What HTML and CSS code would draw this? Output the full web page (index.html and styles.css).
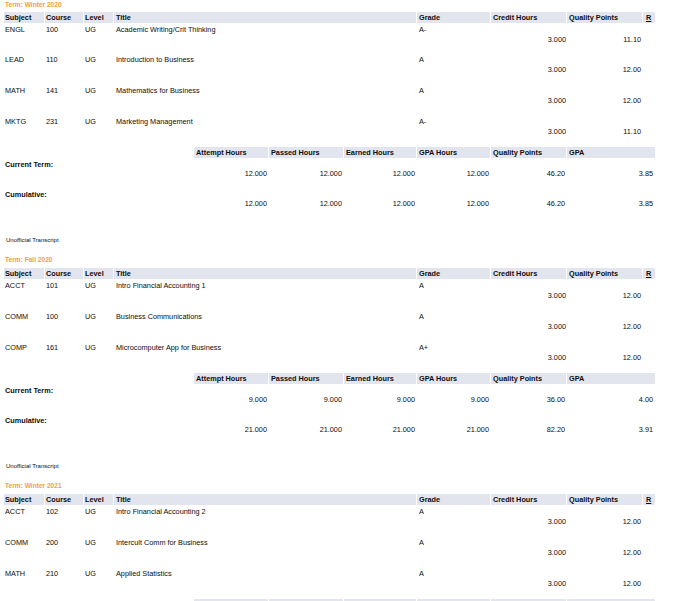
FILE: index.html
```html
<!DOCTYPE html>
<html lang="en">
<head>
<meta charset="utf-8">
<title>Unofficial Transcript</title>
<link rel="stylesheet" href="styles.css">
</head>
<body>
<div class="transcript">

  <section class="term">
    <div class="term-title">Term: Winter 2020</div>
    <div class="course-head">
      <div class="c-subj">Subject</div><div class="c-crse">Course</div><div class="c-lvl">Level</div><div class="c-title">Title</div><div class="c-grade">Grade</div><div class="c-cred">Credit Hours</div><div class="c-qp">Quality Points</div><div class="c-r">R</div>
    </div>
    <div class="course">
      <div class="course-main"><div class="c-subj">ENGL</div><div class="c-crse">100</div><div class="c-lvl">UG</div><div class="c-title">Academic Writing/Crit Thinking</div><div class="c-grade">A-</div></div>
      <div class="course-nums"><div class="n-cred">3.000</div><div class="n-qp">11.10</div></div>
    </div>
    <div class="course">
      <div class="course-main"><div class="c-subj">LEAD</div><div class="c-crse">110</div><div class="c-lvl">UG</div><div class="c-title">Introduction to Business</div><div class="c-grade">A</div></div>
      <div class="course-nums"><div class="n-cred">3.000</div><div class="n-qp">12.00</div></div>
    </div>
    <div class="course">
      <div class="course-main"><div class="c-subj">MATH</div><div class="c-crse">141</div><div class="c-lvl">UG</div><div class="c-title">Mathematics for Business</div><div class="c-grade">A</div></div>
      <div class="course-nums"><div class="n-cred">3.000</div><div class="n-qp">12.00</div></div>
    </div>
    <div class="course">
      <div class="course-main"><div class="c-subj">MKTG</div><div class="c-crse">231</div><div class="c-lvl">UG</div><div class="c-title">Marketing Management</div><div class="c-grade">A-</div></div>
      <div class="course-nums"><div class="n-cred">3.000</div><div class="n-qp">11.10</div></div>
    </div>
    <div class="totals-head">
      <div>Attempt Hours</div><div>Passed Hours</div><div>Earned Hours</div><div>GPA Hours</div><div>Quality Points</div><div>GPA</div>
    </div>
    <div class="totals-row">
      <div class="t-label">Current Term:</div>
      <div class="t-vals"><div>12.000</div><div>12.000</div><div>12.000</div><div>12.000</div><div>46.20</div><div class="t-gpa">3.85</div></div>
    </div>
    <div class="totals-row">
      <div class="t-label">Cumulative:</div>
      <div class="t-vals"><div>12.000</div><div>12.000</div><div>12.000</div><div>12.000</div><div>46.20</div><div class="t-gpa">3.85</div></div>
    </div>
    <div class="footer-note">Unofficial Transcript</div>
  </section>

  <section class="term">
    <div class="term-title">Term: Fall 2020</div>
    <div class="course-head">
      <div class="c-subj">Subject</div><div class="c-crse">Course</div><div class="c-lvl">Level</div><div class="c-title">Title</div><div class="c-grade">Grade</div><div class="c-cred">Credit Hours</div><div class="c-qp">Quality Points</div><div class="c-r">R</div>
    </div>
    <div class="course">
      <div class="course-main"><div class="c-subj">ACCT</div><div class="c-crse">101</div><div class="c-lvl">UG</div><div class="c-title">Intro Financial Accounting 1</div><div class="c-grade">A</div></div>
      <div class="course-nums"><div class="n-cred">3.000</div><div class="n-qp">12.00</div></div>
    </div>
    <div class="course">
      <div class="course-main"><div class="c-subj">COMM</div><div class="c-crse">100</div><div class="c-lvl">UG</div><div class="c-title">Business Communications</div><div class="c-grade">A</div></div>
      <div class="course-nums"><div class="n-cred">3.000</div><div class="n-qp">12.00</div></div>
    </div>
    <div class="course">
      <div class="course-main"><div class="c-subj">COMP</div><div class="c-crse">161</div><div class="c-lvl">UG</div><div class="c-title">Microcomputer App for Business</div><div class="c-grade">A+</div></div>
      <div class="course-nums"><div class="n-cred">3.000</div><div class="n-qp">12.00</div></div>
    </div>
    <div class="totals-head">
      <div>Attempt Hours</div><div>Passed Hours</div><div>Earned Hours</div><div>GPA Hours</div><div>Quality Points</div><div>GPA</div>
    </div>
    <div class="totals-row">
      <div class="t-label">Current Term:</div>
      <div class="t-vals"><div>9.000</div><div>9.000</div><div>9.000</div><div>9.000</div><div>36.00</div><div class="t-gpa">4.00</div></div>
    </div>
    <div class="totals-row">
      <div class="t-label">Cumulative:</div>
      <div class="t-vals"><div>21.000</div><div>21.000</div><div>21.000</div><div>21.000</div><div>82.20</div><div class="t-gpa">3.91</div></div>
    </div>
    <div class="footer-note">Unofficial Transcript</div>
  </section>

  <section class="term">
    <div class="term-title">Term: Winter 2021</div>
    <div class="course-head">
      <div class="c-subj">Subject</div><div class="c-crse">Course</div><div class="c-lvl">Level</div><div class="c-title">Title</div><div class="c-grade">Grade</div><div class="c-cred">Credit Hours</div><div class="c-qp">Quality Points</div><div class="c-r">R</div>
    </div>
    <div class="course">
      <div class="course-main"><div class="c-subj">ACCT</div><div class="c-crse">102</div><div class="c-lvl">UG</div><div class="c-title">Intro Financial Accounting 2</div><div class="c-grade">A</div></div>
      <div class="course-nums"><div class="n-cred">3.000</div><div class="n-qp">12.00</div></div>
    </div>
    <div class="course">
      <div class="course-main"><div class="c-subj">COMM</div><div class="c-crse">200</div><div class="c-lvl">UG</div><div class="c-title">Intercult Comm for Business</div><div class="c-grade">A</div></div>
      <div class="course-nums"><div class="n-cred">3.000</div><div class="n-qp">12.00</div></div>
    </div>
    <div class="course">
      <div class="course-main"><div class="c-subj">MATH</div><div class="c-crse">210</div><div class="c-lvl">UG</div><div class="c-title">Applied Statistics</div><div class="c-grade">A</div></div>
      <div class="course-nums"><div class="n-cred">3.000</div><div class="n-qp">12.00</div></div>
    </div>
    <div class="totals-head">
      <div>Attempt Hours</div><div>Passed Hours</div><div>Earned Hours</div><div>GPA Hours</div><div>Quality Points</div><div>GPA</div>
    </div>
  </section>

</div>
</body>
</html>
```

FILE: styles.css
```css
html {
  overflow: hidden;
  background: #ffffff;
}

body {
  margin: 0;
  padding: 0 0 0 4px;
  font-family: "Liberation Sans", Arial, sans-serif;
  font-size: 7.3px;
  color: #0d0d0d;
  background: #ffffff;
}

.transcript {
  width: 651px;
}

.term-title {
  height: 10px;
  line-height: 10px;
  padding-left: 1px;
  margin-bottom: 1.5px;
  font-size: 6.6px;
  font-weight: bold;
  color: #f59e3b;
}

.term + .term .term-title {
  margin-bottom: 3px;
}

.course-head,
.course-main {
  display: grid;
  grid-template-columns: 40px 38px 29px 302px 73px 75px 75px 12px;
  column-gap: 1px;
}

.course-head {
  height: 11px;
  line-height: 11px;
  margin-bottom: 2px;
  font-weight: bold;
}

.course-head > div {
  background: #e3e5ee;
  white-space: nowrap;
}

.c-subj,
.c-crse,
.c-lvl {
  padding-left: 1px;
}

.c-title,
.c-grade,
.c-cred,
.c-qp {
  padding-left: 2px;
}

.c-r {
  padding-left: 3px;
  text-decoration: underline;
}

.course {
  height: 30.7px;
  line-height: 10px;
}

.course-main {
  height: 10px;
}

.course-nums {
  display: grid;
  grid-template-columns: 75px 75px;
  column-gap: 1px;
  margin-left: 487px;
  height: 10px;
}

.n-cred,
.n-qp {
  text-align: right;
}

.n-qp {
  padding-right: 1px;
}

.totals-head,
.t-vals {
  display: grid;
  grid-template-columns: 74px 74px 72px 73px 75px 88px;
  column-gap: 1px;
  margin-left: 190px;
}

.totals-head {
  height: 11px;
  line-height: 11px;
  margin-bottom: 1.5px;
  font-weight: bold;
}

.totals-head > div {
  background: #e3e5ee;
  padding-left: 2px;
  white-space: nowrap;
}

.totals-row {
  height: 30.5px;
  line-height: 10px;
}

.t-label {
  height: 9px;
  padding-left: 1px;
  font-weight: bold;
}

.t-vals {
  height: 10px;
}

.t-vals > div {
  text-align: right;
  padding-right: 1px;
}

.t-vals > .t-gpa {
  padding-right: 2px;
}

.footer-note {
  margin-top: 14.5px;
  height: 10px;
  line-height: 10px;
  margin-bottom: 10px;
  padding-left: 2px;
  font-size: 6px;
  color: #0d0d0d;
}
```
